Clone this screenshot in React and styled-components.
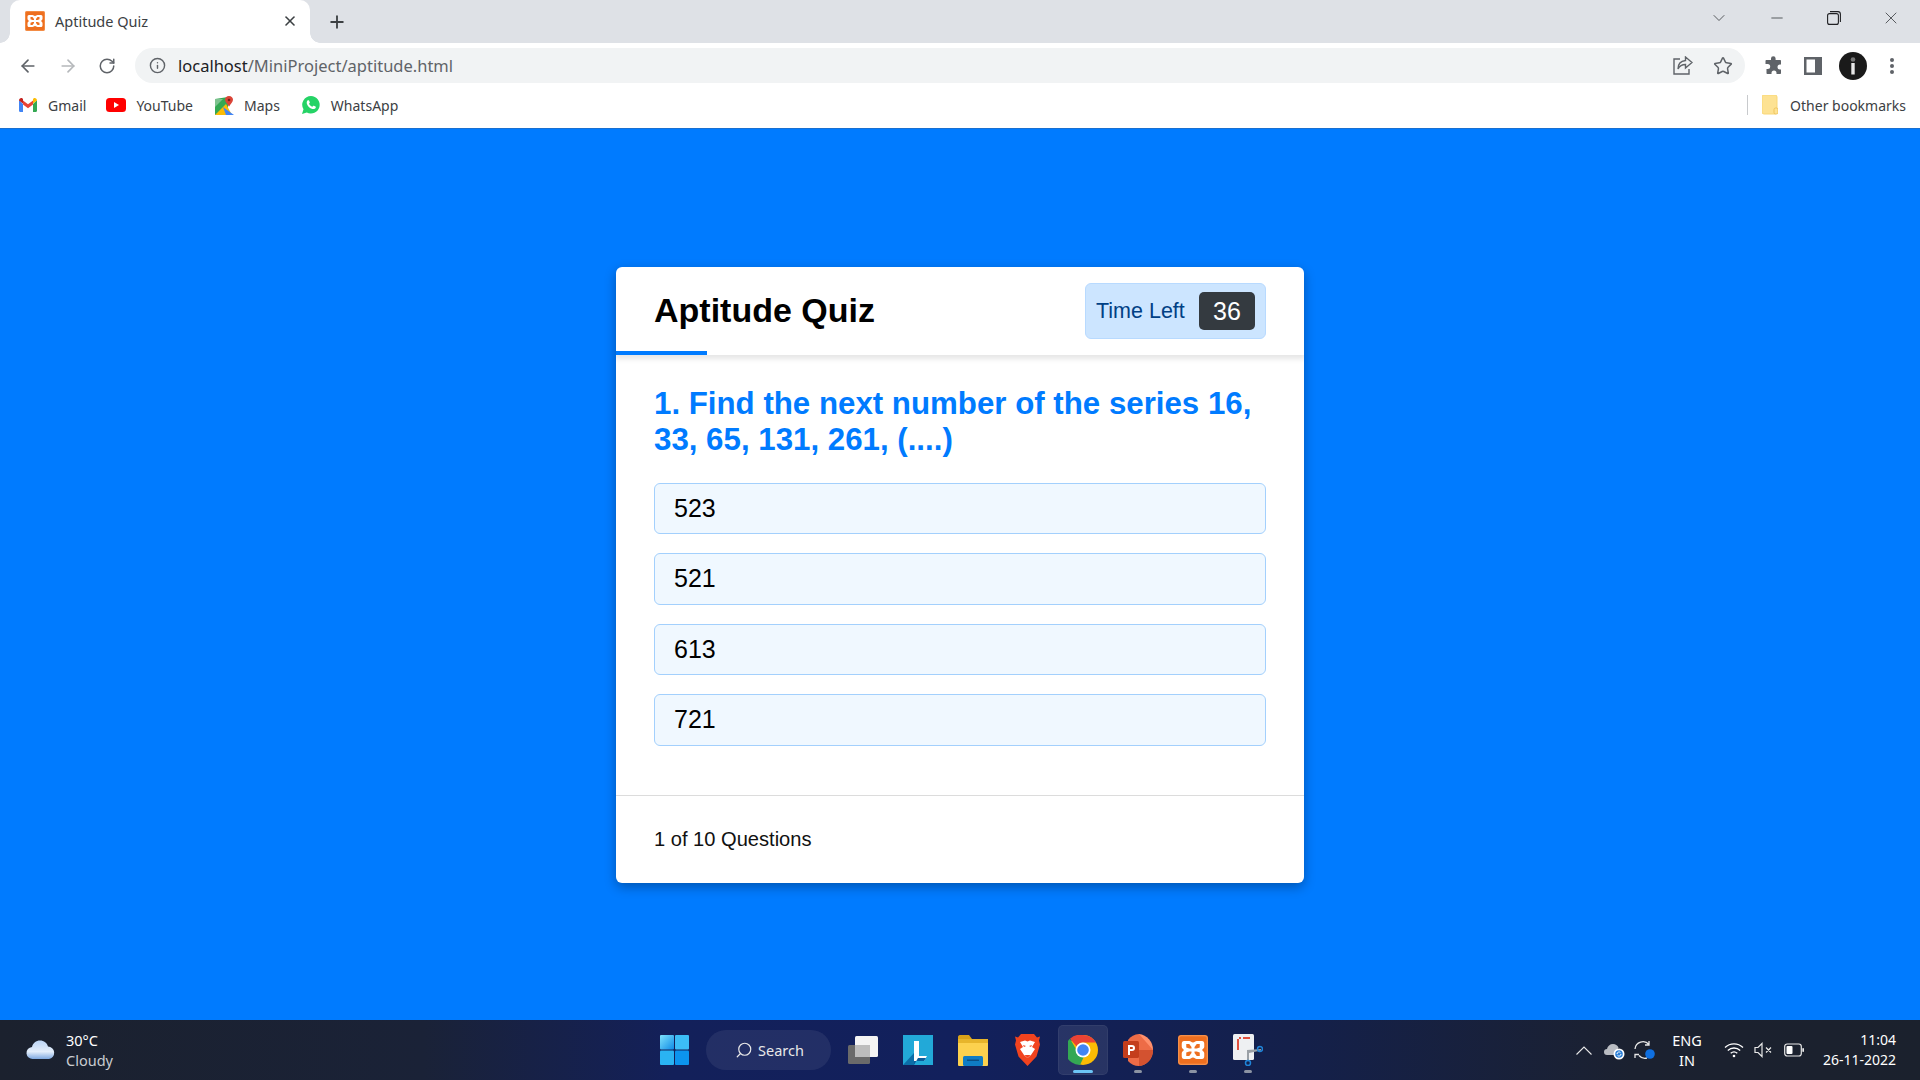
import React from "react";
import styled, { createGlobalStyle } from "styled-components";
import { ArrowLeft, ArrowRight, RotateCw, Info, Star, X, Plus, ChevronDown, Minus, Search as SearchGlyph } from "lucide-react";

const Global = createGlobalStyle`
  html, body { margin: 0; padding: 0; height: 100%; overflow: hidden; }
  #root { height: 100%; }
  * { box-sizing: border-box; }
`;

const Screen = styled.div`
  height: 1080px; width: 1920px; display: flex; flex-direction: column;
  font-family: "Noto Sans", "Open Sans", sans-serif;
`;

/* browser chrome */
const TabStrip = styled.div`
  height: 43px; background: #dee1e6; display: flex; align-items: center; padding-left: 10px; flex: none;
`;
const Tab = styled.div`
  position: relative; width: 300px; height: 43px; background: #fff; border-radius: 10px 10px 0 0;
  display: flex; align-items: center; padding: 0 12px 2px 15px; color: #3c4043; font-size: 14.5px;
  &::before, &::after { content: ""; position: absolute; bottom: 0; width: 10px; height: 10px; }
  &::before { left: -10px; background: radial-gradient(circle at 0 0, #dee1e6 9.5px, #fff 10px); }
  &::after { right: -10px; background: radial-gradient(circle at 100% 0, #dee1e6 9.5px, #fff 10px); }
`;
const TabTitle = styled.span` margin-left: 10px; flex: 1; white-space: nowrap; `;
const NewTab = styled.div` margin-left: 17px; display: flex; color: #3c4043; `;
const WindowControls = styled.div`
  margin-left: auto; display: flex; align-items: center; color: #3c4043; height: 36px; margin-top: -7px;
`;
const WinBtn = styled.div`
  display: flex; justify-content: center; width: ${p => p.$w}px;
`;
const Toolbar = styled.div`
  height: 45px; background: #fff; display: flex; align-items: center; padding: 0 0 0 18px; flex: none;
`;
const NavBtn = styled.div`
  width: ${p => p.$w || 40}px; display: flex; color: #5f6368;
`;
const Omnibox = styled.div`
  width: 1610px; height: 35px; border-radius: 18px; background: #f1f3f4; display: flex; align-items: center;
  padding: 0 14px 0 14px; color: #5f6368;
`;
const Url = styled.div`
  margin-left: 12px; font-size: 16.5px; color: #5f6368; flex: 1; white-space: nowrap; margin-top: -1px;
  b { font-weight: 400; color: #202124; }
`;
const OmniIcons = styled.div` display: flex; align-items: center; gap: 20px; margin-right: -2px; `;
const ToolIcons = styled.div` display: flex; align-items: center; margin-left: 19px; `;
const ToolSlot = styled.div` width: ${p => p.$w || 40}px; display: flex; justify-content: flex-start; color: #5f6368; `;
const Bookmarks = styled.div`
  height: 40px; background: #fff; display: flex; align-items: center; padding: 0 14px 6px 19px; font-size: 14px; color: #3c4043; flex: none;
`;
const Bookmark = styled.div`
  display: flex; align-items: center; gap: ${p => p.$gap ?? 11}px; margin-right: ${p => p.$mr ?? 21}px; white-space: nowrap;
`;
const Spacer = styled.div` flex: 1; `;
const Sep = styled.div` width: 1px; height: 20px; background: #c8cacd; margin-right: 14px; `;

/* page */
const Page = styled.main`
  flex: 1; background: #007bff; display: flex; justify-content: center; align-items: flex-start;
  padding-top: 138px; border-top: 1px solid #1a6fd0; font-family: "Liberation Sans", Arial, sans-serif;
`;
const Card = styled.section`
  width: 688px; height: 616px; background: #fff; border-radius: 6px; box-shadow: 0 4px 12px rgba(0,0,0,.3);
  display: flex; flex-direction: column; overflow: hidden;
`;
const Header = styled.header`
  position: relative; height: 88px; flex: none; padding: 0 38px; display: flex; justify-content: space-between; align-items: center;
  box-shadow: 0 3px 5px 1px rgba(0,0,0,.1);
  &::after { content: ""; position: absolute; left: 0; bottom: 0; width: 91px; height: 4px; background: #007bff; }
`;
const Title = styled.h1` margin: 0 0 3px; font-size: 34px; font-weight: 700; color: #000; line-height: 1; `;
const Timer = styled.div`
  width: 181px; height: 56px; background: #cce5ff; border: 1px solid #b8daff; border-radius: 6px; color: #004085;
  display: flex; align-items: center; padding: 0 10px; justify-content: space-between; font-size: 21.5px;
`;
const Seconds = styled.span`
  width: 56px; height: 38px; border-radius: 5px; background: #343a40; color: #fff; display: flex; align-items: center; justify-content: center; font-size: 25px;
`;
const Body = styled.div` flex: 1; padding: 31px 38px 0; `;
const Question = styled.h2` margin: 0 0 24.5px; font-size: 31.25px; line-height: 36px; font-weight: 700; color: #007bff; `;
const Options = styled.div` display: flex; flex-direction: column; gap: 19px; `;
const Option = styled.div`
  height: 51.5px; border: 1px solid #a3d0fd; background: #f0f8ff; border-radius: 6px; padding: 0 19px;
  display: flex; align-items: center; font-size: 25px; color: #000;
`;
const Footer = styled.footer`
  height: 88px; flex: none; border-top: 1px solid #dcdcdc; padding: 0 38px 1px; display: flex; align-items: center; font-size: 20.1px; color: #111;
`;

/* taskbar */
const Taskbar = styled.footer`
  height: 60px; flex: none; display: grid; grid-template-columns: 1fr auto 1fr; align-items: center; color: #fff;
  background: linear-gradient(90deg, #1b212e 0%, #1a2237 22%, #13205a 35%, #12205c 50%, #14204a 68%, #1b2130 85%, #1b212d 100%);
  font-family: "Noto Sans", "Open Sans", sans-serif;
`;
const Weather = styled.div` display: flex; align-items: center; padding-left: 26px; gap: 10px; `;
const WeatherText = styled.div`
  font-size: 14.5px; line-height: 20px;
  span { display: block; color: #c9ccd1; font-size: 14.5px; }
`;
const Dock = styled.div` display: flex; align-items: center; height: 60px; padding-left: 3px; `;
const StartSlot = styled.div` width: 46px; display: flex; justify-content: flex-start; `;
const SearchPill = styled.div`
  width: 125px; height: 40px; border-radius: 20px; background: rgba(255,255,255,.07); margin-right: 17px;
  display: flex; align-items: center; padding-left: 29px; gap: 5px; font-size: 14.5px; color: #e8e8e8;
`;
const DockApp = styled.div`
  position: relative; width: ${p => p.$w ?? 55}px; height: 50px; display: flex; align-items: center; justify-content: ${p => p.$center ? "center" : "flex-start"};
  border-radius: 5px; flex: none;
  ${p => p.$active && "background: rgba(255,255,255,.09); margin: 0 15px 0 -10px; box-shadow: inset 0 0 0 1px rgba(255,255,255,.05);"}
  &::after {
    content: ${p => (p.$dot ? '""' : "none")}; position: absolute; bottom: 2px; border-radius: 2px; height: 3px;
    left: ${p => (p.$active ? "15px" : "11px")};
    width: ${p => (p.$active ? "20px" : "8px")};
    background: ${p => (p.$active ? "#6cc4f5" : "#8b93a3")};
  }
`;
const Tray = styled.div` display: flex; align-items: center; justify-content: flex-end; padding-right: 24px; `;
const TraySlot = styled.div` width: ${p => p.$w}px; display: flex; color: #fff; `;
const Lang = styled.div` width: 52px; font-size: 14.5px; line-height: 20px; text-align: center; padding-right: 22px; white-space: nowrap; `;
const Clock = styled.div` font-size: 14px; line-height: 20px; text-align: right; width: 92px; white-space: nowrap; `;

/* drawings */
const Xampp = ({ s = 20 }) => (
  <svg width={s} height={s} viewBox="0 0 20 20"><rect width="20" height="20" rx="2" fill="#ee6f1f" /><rect x=".5" y=".5" width="19" height="19" rx="1.500" fill="none" stroke="#f7a060" strokeWidth=".6" />
    <path fillRule="evenodd" d="M4 4h3.500c1 0 1.500 1 2.500 1s1.500-1 2.500-1H16c1 0 1.500.8 1.500 1.800v2c0 1-.9 1.400-1.500 2.200.6.800 1.500 1.200 1.500 2.200v2c0 1-.5 1.800-1.500 1.800h-3.500c-1 0-1.500-1-2.500-1s-1.500 1-2.500 1H4c-1 0-1.500-.8-1.500-1.800v-2c0-1 .9-1.400 1.500-2.200-.6-.8-1.500-1.200-1.500-2.200v-2C2.500 4.800 3 4 4 4zM5.500 6v2.300L7.500 9H9V8L7.500 6zM14.500 6h-2L11 8v1h1.500l2-.7zM5.500 14h2L9 12v-1H7.500l-2 .7zM14.500 14v-2.300l-2-.7H11v1l1.500 2z" fill="#fff" /></svg>
);
const Gmail = () => (
  <svg width="18" height="14" viewBox="0 0 18 14">
    <path d="M0 2v10.500c0 .8.500 1.500 1.300 1.500H4V6z" fill="#4285f4" /><path d="M18 2v10.500c0 .8-.5 1.500-1.300 1.500H14V6z" fill="#34a853" />
    <path d="M4 2.500L9 6.300l5-3.800V6.500L9 10.300 4 6.500z" fill="#ea4335" /><path d="M0 2.500C0 .5 2 -.5 3.500.5L4 1v4.500L0 2.500z" fill="#c5221f" /><path d="M18 2.500c0-2-2-3-3.500-2L14 1v4.500l4-3z" fill="#fbbc04" />
  </svg>
);
const YouTube = () => (
  <svg width="20" height="14" viewBox="0 0 20 14"><rect width="20" height="14" rx="3.500" fill="#f00" /><path d="M8 4l5 3-5 3z" fill="#fff" /></svg>
);
const Maps = () => (
  <svg width="19" height="19" viewBox="0 0 19 19">
    <path d="M0 3l13-2v16L0 19z" fill="#34a853" /><path d="M0 19L11 8l6 11z" fill="#fbbc04" /><path d="M8 11l11 8h-8z" fill="#4285f4" /><path d="M0 3h8L0 11z" fill="#7dc28f" />
    <path d="M14 0c2.500 0 4 1.800 4 3.800 0 2.500-3 4.500-4 7-1-2.500-4-4.500-4-7C10 1.800 11.500 0 14 0z" fill="#db4437" /><circle cx="14" cy="4" r="1.300" fill="#7b1f17" />
  </svg>
);
const WhatsApp = () => (
  <svg width="18" height="18" viewBox="0 0 18 18"><path d="M9 0a8.800 8.800 0 0 0-7.500 13.300L0 18l4.800-1.400A8.800 8.800 0 1 0 9 0z" fill="#25d366" />
    <path d="M5.500 4.500c.5-.5 1.300-.5 1.500 0l.8 1.700c.1.300 0 .6-.2.800l-.6.700c.7 1.400 1.800 2.400 3.300 3.100l.8-.9c.2-.2.500-.3.800-.1l1.600.8c.4.200.4.800.1 1.300-.6 1-2 1.400-3.200 1-2.800-.8-5-3-5.600-5.500-.2-1 .1-2.200.7-2.900z" fill="#fff" /></svg>
);
const Share = () => (
  <svg width="20" height="19" viewBox="0 0 20 19" fill="none" stroke="#5f6368" strokeWidth="1.400"><path d="M7 3H1v15h15v-5" /><path d="M12.500 1L19 6.500 12.500 12V8.500C9 8.500 6.500 10 5 13c0-5 3-8 7.500-8.500z" /></svg>
);
const Puzzle = () => (
  <svg width="19" height="19" viewBox="0 0 19 19"><path d="M7 2.500a2.300 2.300 0 0 1 4.600 0V4h4.400c.6 0 1 .4 1 1v3.500h-1a2.500 2.500 0 0 0 0 5h1V17c0 .6-.4 1-1 1h-3.500v-1a2.500 2.500 0 0 0-5 0v1H3.500c-.6 0-1-.4-1-1v-4h1.200a2.500 2.500 0 0 0 0-5H1.500V5c0-.6.400-1 1-1H7z" fill="#5f6368" /></svg>
);
const SidePanel = () => (
  <svg width="18" height="18" viewBox="0 0 18 18"><path fillRule="evenodd" d="M0 0h18v18H0zM2.500 2.500v13H11v-13z" fill="#5f6368" /></svg>
);
const Profile = () => (
  <svg width="28" height="28" viewBox="0 0 28 28"><circle cx="14" cy="14" r="14" fill="#1a1a1a" /><circle cx="14" cy="7.500" r="2.300" fill="#777" /><rect x="12.300" y="11" width="3.400" height="11.500" fill="#e8e8e8" /></svg>
);
const Dots = () => (
  <svg width="6" height="18" viewBox="0 0 6 18" fill="#5f6368"><circle cx="3" cy="3" r="2" /><circle cx="3" cy="9" r="2" /><circle cx="3" cy="15" r="2" /></svg>
);
const Folder = () => (
  <svg width="16" height="20" viewBox="0 0 16 20"><rect width="15" height="19" rx="2" fill="#fde293" stroke="#f9d776" /><rect x="12" y="13" width="4" height="6" rx="1.500" fill="#fde293" stroke="#e9b949" strokeWidth=".7" /></svg>
);
const Restore = () => (
  <svg width="14" height="14" viewBox="0 0 14 14" fill="none" stroke="#202124" strokeWidth="1.100"><rect x=".6" y="2.600" width="10.800" height="10.800" rx="2" /><path d="M3 .6h8a2.500 2.500 0 0 1 2.400 2.400v8" /></svg>
);
const Caret = () => (
  <svg width="16" height="9" viewBox="0 0 16 9" fill="none" stroke="#e8e8e8" strokeWidth="1.100"><path d="M.5 8.500L8 1l7.500 7.500" /></svg>
);
const Cloud = () => (
  <svg width="30" height="20" viewBox="0 0 30 20"><defs><linearGradient id="c" x1="0" y1="0" x2="0" y2="1"><stop offset="0" stopColor="#bcd6f7" /><stop offset=".6" stopColor="#e4eefb" /><stop offset="1" stopColor="#7ea8e0" /></linearGradient></defs>
    <path d="M7 19a6 6 0 0 1-1-12C7 3 10 .5 14 .5c4 0 7 2.500 8 6a6.300 6.300 0 0 1 1 12.500z" fill="url(#c)" /></svg>
);
const Start = () => (
  <svg width="29" height="30" viewBox="0 0 29 30"><defs><linearGradient id="w" x1="0" y1="0" x2="1" y2="1"><stop offset="0" stopColor="#7ee2fc" /><stop offset="1" stopColor="#0f8be6" /></linearGradient></defs>
    <rect width="14" height="14.500" rx="1" fill="url(#w)" /><rect x="15" width="14" height="14.500" rx="1" fill="#3cbdf6" /><rect y="15.500" width="14" height="14.500" rx="1" fill="#2ab3f2" /><rect x="15" y="15.500" width="14" height="14.500" rx="1" fill="#0c94ee" /></svg>
);
const Desktops = () => (
  <svg width="30" height="28" viewBox="0 0 30 28"><rect y="9" width="22" height="19" rx="1.500" fill="#6a6a6a" /><rect x="7" width="23" height="21" rx="1.500" fill="#f4f4f4" /><rect x="7" y="9" width="15" height="12" fill="#bdbdbd" /></svg>
);
const LApp = () => (
  <svg width="30" height="30" viewBox="0 0 30 30"><rect width="30" height="30" fill="#22a9d8" /><path d="M0 30L11 18v12z" fill="#0c6ea8" /><path d="M11 6h5v15h8l-3 5H11z" fill="#fff" /><path d="M11 26h10l2-3H15L11 30z" fill="#0b5c9a" /></svg>
);
const Files = () => (
  <svg width="30" height="32" viewBox="0 0 30 32"><path d="M0 3c0-1 .7-2 2-2h9l3 4h-14z" fill="#d9a21a" /><rect y="5" width="30" height="27" rx="1" fill="#fcd14e" /><rect y="5" width="30" height="4" fill="#e7b52b" /><rect x="5" y="22" width="20" height="10" rx="1.500" fill="#0f7cc4" /><rect x="9" y="25.500" width="12" height="1.500" fill="#0a4f85" /></svg>
);
const Brave = () => (
  <svg width="25" height="32" viewBox="0 0 25 32"><path d="M6 0h13l3 3.500 3-1-1 4 1 4-3.500 12L12.500 32l-9-9.500L0 10.500l1-4-1-4 3 1z" fill="#f1431e" /><path d="M5 8l5-1.500 2.500 1L15 6.500 20 8l-3 5 3 2-4 6-3.500 3L9 21l-4-6 3-2z" fill="#fff" /><path d="M9.500 21h6l-3 3z" fill="#f1431e" /><path d="M8 11l3 1-2 1zM17 11l-3 1 2 1z" fill="#f1431e" /></svg>
);
const Chrome = () => (
  <svg width="30" height="30" viewBox="0 0 30 30"><circle cx="15" cy="15" r="15" fill="#fbbc04" /><path d="M15 0a15 15 0 0 1 13 7.500H15A7.500 7.500 0 0 0 8.500 11.300L2 3.800A15 15 0 0 1 15 0z" fill="#ea4335" /><path d="M2 3.800l6.500 11.200a7.500 7.500 0 0 0 9 3.300L12 30A15 15 0 0 1 2 3.800z" fill="#34a853" /><circle cx="15" cy="15" r="7.500" fill="#fff" /><circle cx="15" cy="15" r="5.800" fill="#4285f4" /></svg>
);
const Ppt = () => (
  <svg width="30" height="32" viewBox="0 0 30 32"><path d="M16 0a16 16 0 0 1 14 16H16z" fill="#ff8f6b" /><path d="M30 16a14.500 16 0 0 1-14 16 15 16 0 0 1-11-5V6A16 16 0 0 1 16 0z" fill="#ed6c47" /><path d="M16 16h14a14.500 16 0 0 1-14 16z" fill="#d35230" /><rect y="7" width="16" height="17" rx="1.500" fill="#c43e1c" /><path d="M5 11h4a3 3 0 0 1 0 6H7v4H5zM7 13v2h2a1 1 0 0 0 0-2z" fill="#fff" /></svg>
);
const Snip = () => (
  <svg width="30" height="32" viewBox="0 0 30 32"><rect width="21" height="26" rx="1.500" fill="#eef0f2" /><path d="M4 3h13v2H6v11H4z" fill="#e0503e" /><path d="M4 3h2v2H4zM8 3h2v2H8z" fill="#eef0f2" /><path d="M14 16l14-1v1.500L16 19z" fill="#9aa0a6" /><circle cx="27" cy="15" r="2.500" fill="none" stroke="#1f84d8" strokeWidth="1.500" /><path d="M15 16v10" stroke="#9aa0a6" strokeWidth="2" /><circle cx="15" cy="29" r="2.500" fill="none" stroke="#1f84d8" strokeWidth="1.500" /></svg>
);
const OneDrive = () => (
  <svg width="21" height="20" viewBox="0 0 21 20"><path d="M3 15a3 3 0 0 1 0-6c.5-3 3-5 6-5 2.500 0 4.500 1.500 5.500 3.500L11 15z" fill="#b9bcc2" /><circle cx="15" cy="14" r="5.500" fill="#fff" /><circle cx="15" cy="14" r="3.800" fill="#2a7fd8" /><path d="M13 14a2 2 0 0 1 3.500-1.300M17 14a2 2 0 0 1-3.500 1.300" stroke="#fff" fill="none" strokeWidth="1" /></svg>
);
const Sync = () => (
  <svg width="21" height="21" viewBox="0 0 21 21" fill="none" stroke="#e8e8e8" strokeWidth="1.300"><path d="M1 9a8 8 0 0 1 14-4.500M15 1v4h-4M13 18a8 8 0 0 1-8-2.500M1 18v-3.500h4" /><circle cx="16" cy="14" r="4.800" fill="#0f6fe0" stroke="none" /></svg>
);
const Wifi = () => (
  <svg width="20" height="16" viewBox="0 0 20 16" fill="none" stroke="#fff" strokeWidth="1.300"><path d="M1 5.500a13 13 0 0 1 18 0M3.800 8.500a9 9 0 0 1 12.400 0M6.700 11.300a5 5 0 0 1 6.600 0" /><circle cx="10" cy="14" r="1.300" fill="#fff" stroke="none" /></svg>
);
const Speaker = () => (
  <svg width="20" height="16" viewBox="0 0 20 16" fill="none" stroke="#e8e8e8" strokeWidth="1.200"><path d="M1 5.500h3L8 1.500v13l-4-4H1zM12 5.500l5 5M17 5.500l-5 5" /></svg>
);
const Battery = () => (
  <svg width="20" height="14" viewBox="0 0 20 14" fill="none"><rect x=".7" y="1" width="16.600" height="12" rx="2.500" stroke="#e8e8e8" strokeWidth="1.200" /><rect x="2.500" y="3" width="6" height="8" rx="1" fill="#fff" /><rect x="18.300" y="5" width="1.700" height="4" rx=".8" fill="#e8e8e8" /></svg>
);

export default function App() {
  return (
    <Screen>
      <Global />
      <TabStrip>
        <Tab>
          <Xampp />
          <TabTitle>Aptitude Quiz</TabTitle>
          <X size={16} strokeWidth={2.4} color="#3c4043" />
        </Tab>
        <NewTab><Plus size={20} strokeWidth={2.2} /></NewTab>
        <WindowControls>
          <WinBtn $w={58}><ChevronDown size={20} strokeWidth={1} /></WinBtn>
          <WinBtn $w={58}><Minus size={18} strokeWidth={1.1} /></WinBtn>
          <WinBtn $w={56}><Restore /></WinBtn>
          <WinBtn $w={58}><X size={20} strokeWidth={1} /></WinBtn>
        </WindowControls>
      </TabStrip>
      <Toolbar>
        <NavBtn><ArrowLeft size={20} strokeWidth={2} /></NavBtn>
        <NavBtn><ArrowRight size={20} strokeWidth={2} color="#b5b8bb" /></NavBtn>
        <NavBtn $w={37}><RotateCw size={18} strokeWidth={2} /></NavBtn>
        <Omnibox>
          <Info size={17} strokeWidth={2} />
          <Url><b>localhost</b>/MiniProject/aptitude.html</Url>
          <OmniIcons>
            <Share />
            <Star size={20} strokeWidth={1.8} color="#5f6368" />
          </OmniIcons>
        </Omnibox>
        <ToolIcons>
          <ToolSlot><Puzzle /></ToolSlot>
          <ToolSlot $w={35}><SidePanel /></ToolSlot>
          <ToolSlot $w={50}><Profile /></ToolSlot>
          <ToolSlot $w={10}><Dots /></ToolSlot>
        </ToolIcons>
      </Toolbar>
      <Bookmarks>
        <Bookmark $mr={20}><Gmail />Gmail</Bookmark>
        <Bookmark $gap={10} $mr={22}><YouTube />YouTube</Bookmark>
        <Bookmark $gap={10} $mr={22}><Maps />Maps</Bookmark>
        <Bookmark><WhatsApp />WhatsApp</Bookmark>
        <Spacer />
        <Sep />
        <Bookmark $gap={12} $mr={0}><Folder />Other bookmarks</Bookmark>
      </Bookmarks>
      <Page>
        <Card>
          <Header>
            <Title>Aptitude Quiz</Title>
            <Timer>Time Left<Seconds>36</Seconds></Timer>
          </Header>
          <Body>
            <Question>1. Find the next number of the series 16, 33, 65, 131, 261, (....)</Question>
            <Options>
              {["523", "521", "613", "721"].map(v => <Option key={v}>{v}</Option>)}
            </Options>
          </Body>
          <Footer>1 of 10 Questions</Footer>
        </Card>
      </Page>
      <Taskbar>
        <Weather>
          <Cloud />
          <WeatherText>30°C<span>Cloudy</span></WeatherText>
        </Weather>
        <Dock>
          <StartSlot><Start /></StartSlot>
          <SearchPill><SearchGlyph size={18} strokeWidth={1.6} style={{ transform: "scaleX(-1)" }} />Search</SearchPill>
          <DockApp><Desktops /></DockApp>
          <DockApp><LApp /></DockApp>
          <DockApp $w={57}><Files /></DockApp>
          <DockApp $w={53}><Brave /></DockApp>
          <DockApp $w={50} $center $active $dot><Chrome /></DockApp>
          <DockApp $dot><Ppt /></DockApp>
          <DockApp $dot><Xampp s={30} /></DockApp>
          <DockApp $w={30} $dot><Snip /></DockApp>
        </Dock>
        <Tray>
          <TraySlot $w={28}><Caret /></TraySlot>
          <TraySlot $w={30}><OneDrive /></TraySlot>
          <TraySlot $w={38}><Sync /></TraySlot>
          <Lang>ENG<br />IN</Lang>
          <TraySlot $w={30}><Wifi /></TraySlot>
          <TraySlot $w={30}><Speaker /></TraySlot>
          <TraySlot $w={20}><Battery /></TraySlot>
          <Clock>11:04<br />26-11-2022</Clock>
        </Tray>
      </Taskbar>
    </Screen>
  );
}
